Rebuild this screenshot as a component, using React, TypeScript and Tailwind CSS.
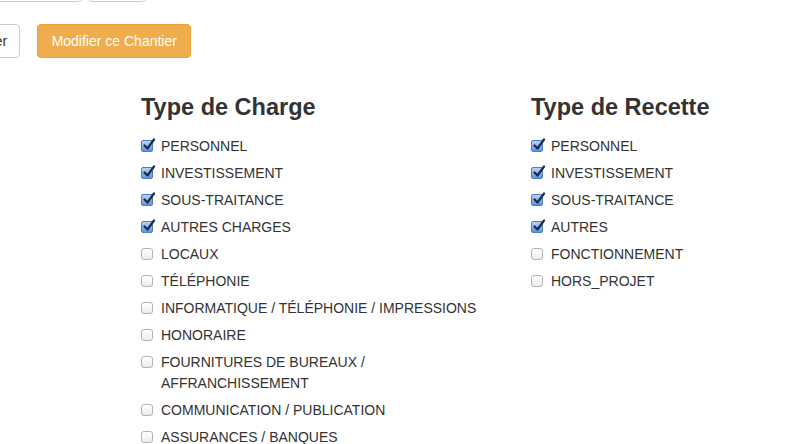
import React from "react";

type Item = { label: string; checked: boolean };

const charges: Item[] = [
  { label: "PERSONNEL", checked: true },
  { label: "INVESTISSEMENT", checked: true },
  { label: "SOUS-TRAITANCE", checked: true },
  { label: "AUTRES CHARGES", checked: true },
  { label: "LOCAUX", checked: false },
  { label: "TÉLÉPHONIE", checked: false },
  { label: "INFORMATIQUE / TÉLÉPHONIE / IMPRESSIONS", checked: false },
  { label: "HONORAIRE", checked: false },
  { label: "FOURNITURES DE BUREAUX / AFFRANCHISSEMENT", checked: false },
  { label: "COMMUNICATION / PUBLICATION", checked: false },
  { label: "ASSURANCES / BANQUES", checked: false },
];

const recettes: Item[] = [
  { label: "PERSONNEL", checked: true },
  { label: "INVESTISSEMENT", checked: true },
  { label: "SOUS-TRAITANCE", checked: true },
  { label: "AUTRES", checked: true },
  { label: "FONCTIONNEMENT", checked: false },
  { label: "HORS_PROJET", checked: false },
];

function Box({ checked }: { checked: boolean }) {
  if (checked) {
    return (
      <span className="relative mt-[4px] block h-[12px] w-[12px] shrink-0 rounded-[2px] border border-[#4f7fc0] bg-gradient-to-b from-[#b9d4f3] to-[#5b95df]">
        <svg
          viewBox="0 0 14 14"
          className="absolute left-[0px] top-[-3px] h-[14px] w-[14px]"
        >
          <path
            d="M2.5 7.5 L5.5 10.5 L12 1.5"
            fill="none"
            stroke="#1c2b4a"
            strokeWidth="2.2"
            strokeLinecap="round"
            strokeLinejoin="round"
          />
        </svg>
      </span>
    );
  }
  return (
    <span className="mt-[4px] block h-[12px] w-[12px] shrink-0 rounded-[3px] border border-[#b3b3b3] bg-gradient-to-b from-white to-[#ececec]" />
  );
}

function Group({ title, items }: { title: string; items: Item[] }) {
  return (
    <div className="w-[360px] shrink-0">
      <h3 className="text-[23.5px] font-bold leading-[26px] text-[#333]">
        {title}
      </h3>
      <div className="mt-[16px] flex flex-col gap-[6px]">
        {items.map((it) => (
          <label key={it.label} className="flex items-start gap-[8px]">
            <Box checked={it.checked} />
            <span className="text-[14px] leading-[21px] text-[#333]">
              {it.label}
            </span>
          </label>
        ))}
      </div>
    </div>
  );
}

export default function App() {
  return (
    <div
      className="h-[444px] w-[793px] overflow-hidden bg-white"
      style={{ fontFamily: '"Liberation Sans", Arial, sans-serif' }}
    >
      {/* buttons cut off at the top */}
      <div className="-mt-[32px] flex gap-[6px]">
        <button className="-ml-[20px] h-[34px] w-[102px] shrink-0 rounded-[4px] border border-[#ccc] bg-white" />
        <button className="h-[34px] w-[58px] shrink-0 rounded-[4px] border border-[#ccc] bg-white" />
      </div>

      <div className="mt-[22px] flex gap-[17px]">
        <button className="-ml-[54px] h-[34px] shrink-0 rounded-[4px] border border-[#ccc] bg-white px-[12px] text-[14px] text-[#333]">
          Annuler
        </button>
        <button className="h-[34px] w-[154px] shrink-0 rounded-[4px] border border-[#eea236] bg-[#f0ad4e] text-[14px] text-white">
          Modifier ce Chantier
        </button>
      </div>

      <div className="mt-[36px] flex gap-[30px] pl-[141px]">
        <Group title="Type de Charge" items={charges} />
        <Group title="Type de Recette" items={recettes} />
      </div>
    </div>
  );
}
